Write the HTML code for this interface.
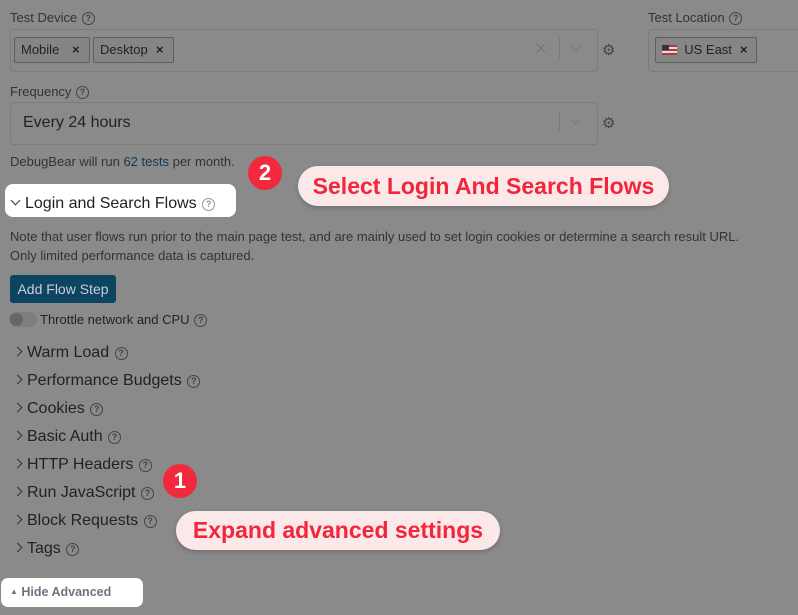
<!DOCTYPE html>
<html><head><style>
body{margin:0;width:798px;height:615px;background:#8a8a8a;font-family:"Liberation Sans",sans-serif;position:relative;overflow:hidden;color:#262626}
.a{position:absolute;white-space:nowrap}
.lbl{font-size:13px;color:#333}
.box{position:absolute;border:1px solid #7c7c7c;border-radius:4px}
.tag{position:absolute;border:1px solid #5e5e5e;background:#858585;border-radius:2px;font-size:13px;height:24px;line-height:24px;padding-left:6px;color:#222}
.q{display:inline-block;width:11px;height:11px;border:1.5px solid #444;border-radius:50%;font-size:9px;line-height:11px;text-align:center;font-weight:bold;color:#444;vertical-align:1px;margin-left:1px}
.item{position:absolute;left:14px;font-size:16px;color:#222}
.item .ch{display:inline-block;width:6px;height:6px;border-right:1.5px solid #333;border-top:1.5px solid #333;transform:rotate(45deg);margin-right:6px;vertical-align:2px}
.pill{position:absolute;background:#fbe9ea;border-radius:20px;color:#f2253b;font-weight:bold;font-size:23px;text-align:center;box-shadow:0 2px 5px rgba(0,0,0,.2)}
.badge{position:absolute;width:34px;height:34px;border-radius:50%;background:#f2283d;color:#fff;font-weight:bold;font-size:22px;line-height:34px;text-align:center}
</style></head><body>
<div class="a lbl" style="left:10px;top:10px">Test Device <span class="q">?</span></div>
<div class="box" style="left:10px;top:29px;width:586px;height:41px"></div>
<div class="tag" style="left:14px;top:37px;width:68px">Mobile <span style="position:absolute;left:57px;font-weight:bold">×</span></div>
<div class="tag" style="left:93px;top:37px;width:73px">Desktop <span style="position:absolute;left:62px;font-weight:bold">×</span></div>
<div class="a" style="left:535px;top:38px;font-size:20px;color:#777">×</div>
<div class="a" style="left:559px;top:38px;width:1px;height:20px;background:#777"></div>
<div class="a" style="left:572px;top:43px;width:6px;height:6px;border-right:1.5px solid #777;border-bottom:1.5px solid #777;transform:rotate(45deg)"></div>
<div class="a" style="left:602px;top:41px;font-size:15px;color:#444">⚙</div>
<div class="a lbl" style="left:648px;top:10px">Test Location <span class="q">?</span></div>
<div class="box" style="left:648px;top:29px;width:160px;height:41px"></div>
<div class="tag" style="left:655px;top:37px;width:94px"><span style="display:inline-block;width:15px;height:10px;background:repeating-linear-gradient(#b03a40 0 2px,#ddd 2px 4px);position:relative;vertical-align:-1px"><span style="position:absolute;left:0;top:0;width:7px;height:5px;background:#334"></span></span>&nbsp; US East <span style="position:absolute;left:84px;font-weight:bold">×</span></div>
<div class="a lbl" style="left:10px;top:84px">Frequency <span class="q">?</span></div>
<div class="box" style="left:10px;top:102px;width:586px;height:41px"></div>
<div class="a" style="left:23px;top:114px;font-size:16px;color:#222">Every 24 hours</div>
<div class="a" style="left:559px;top:111px;width:1px;height:20px;background:#777"></div>
<div class="a" style="left:572px;top:116px;width:6px;height:6px;border-right:1.5px solid #777;border-bottom:1.5px solid #777;transform:rotate(45deg)"></div>
<div class="a" style="left:602px;top:114px;font-size:15px;color:#444">⚙</div>
<div class="a" style="left:10px;top:154px;font-size:13px;color:#333">DebugBear will run <span style="color:#123a52">62 tests</span> per month.</div>
<div class="badge" style="left:248px;top:156px">2</div>
<div class="pill" style="left:298px;top:166px;width:371px;height:40px;line-height:40px">Select Login And Search Flows</div>
<div class="a" style="left:5px;top:184px;width:231px;height:33px;background:#fff;border-radius:8px"></div>
<div class="a" style="left:12px;top:195px;font-size:16px;color:#222"><span style="display:inline-block;width:6px;height:6px;border-right:1.5px solid #333;border-bottom:1.5px solid #333;transform:rotate(45deg);vertical-align:4px;margin-right:6px"></span>Login and Search Flows <span class="q" style="border-color:#8a96a0;color:#8a96a0">?</span></div>
<div class="a" style="left:10px;top:227px;font-size:13px;color:#333;line-height:19px">Note that user flows run prior to the main page test, and are mainly used to set login cookies or determine a search result URL.<br>Only limited performance data is captured.</div>
<div class="a" style="left:10px;top:275px;width:106px;height:28px;background:#0c4560;border-radius:3px;color:#ccd;font-size:14px;line-height:28px;text-align:center">Add Flow Step</div>
<div class="a" style="left:9px;top:312px;width:28px;height:15px;background:#7e7e7e;border-radius:8px"></div>
<div class="a" style="left:10px;top:313px;width:13px;height:13px;background:#666;border-radius:50%"></div>
<div class="a" style="left:40px;top:312px;font-size:13px;color:#222">Throttle network and CPU <span class="q">?</span></div>
<div class="item" style="top:344px"><span class="ch"></span>Warm Load <span class="q">?</span></div>
<div class="item" style="top:372px"><span class="ch"></span>Performance Budgets <span class="q">?</span></div>
<div class="item" style="top:400px"><span class="ch"></span>Cookies <span class="q">?</span></div>
<div class="item" style="top:428px"><span class="ch"></span>Basic Auth <span class="q">?</span></div>
<div class="item" style="top:456px"><span class="ch"></span>HTTP Headers <span class="q">?</span></div>
<div class="item" style="top:484px"><span class="ch"></span>Run JavaScript <span class="q">?</span></div>
<div class="item" style="top:512px"><span class="ch"></span>Block Requests <span class="q">?</span></div>
<div class="item" style="top:540px"><span class="ch"></span>Tags <span class="q">?</span></div>
<div class="badge" style="left:163px;top:464px">1</div>
<div class="pill" style="left:176px;top:511px;width:324px;height:39px;line-height:39px">Expand advanced settings</div>
<div class="a" style="left:1px;top:578px;width:142px;height:29px;background:#fff;border-radius:7px"></div>
<div class="a" style="left:10px;top:585px;font-size:12.5px;font-weight:bold;color:#6b7480"><span style="font-size:8px;vertical-align:2px">▲</span> Hide Advanced</div>
</body></html>
